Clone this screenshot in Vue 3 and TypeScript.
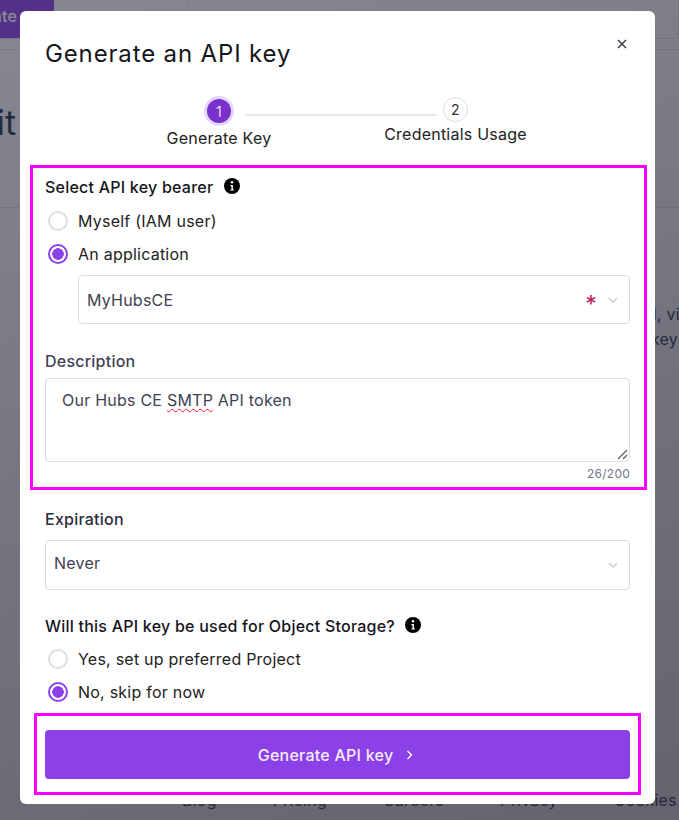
<script setup lang="ts">
const footerLinks: string[] = ['Blog', 'Pricing', 'Careers', 'Privacy', 'Cookies']
</script>

<template>
  <div class="page">
    <header class="topbar">
      <div class="topbtn"><span>Generate</span></div>
      <div class="topcell first"></div>
      <div class="topcell"></div>
    </header>
    <div class="subbar"></div>
    <div class="hero">
      <div class="herotitle">Credit</div>
    </div>
    <div class="bgtext">
      <p class="l1">by email, via</p>
      <p class="l2">your API key.</p>
    </div>
    <footer class="bgfooter">
      <span v-for="link in footerLinks" :key="link">{{ link }}</span>
    </footer>

    <div class="overlay"></div>

    <section class="modal">
      <div class="modalhead">
        <h1>Generate an API key</h1>
        <button class="close" aria-label="Close">
          <svg width="10" height="10" viewBox="0 0 10 10"><path d="M1 1l8 8M9 1L1 9" stroke="#3a3c4c" stroke-width="1.5" fill="none" /></svg>
        </button>
      </div>

      <div class="stepper">
        <div class="step step1">
          <div class="dot active">1</div>
          <div class="steplabel">Generate Key</div>
        </div>
        <div class="stepline"></div>
        <div class="step step2">
          <div class="dot idle">2</div>
          <div class="steplabel">Credentials Usage</div>
        </div>
      </div>

      <div class="mark markform">
        <div class="legend">
          <span>Select API key bearer</span>
          <svg class="info" width="16" height="16" viewBox="0 0 16 16"><circle cx="8" cy="8" r="8" fill="#000" /><circle cx="8" cy="4.3" r="1.3" fill="#fff" /><path d="M6.4 7h2.5v4.4h1v1.2H6.4v-1.2h1V8.2h-1z" fill="#fff" /></svg>
        </div>
        <label class="radio"><span class="rb"></span>Myself (IAM user)</label>
        <label class="radio"><span class="rb on"></span>An application</label>
        <div class="select appselect">
          <span>MyHubsCE</span>
          <span class="asterisk">*</span>
          <svg class="chev" width="10" height="6" viewBox="0 0 10 6"><path d="M1 1l4 4 4-4" stroke="#c9c9ce" stroke-width="1.3" fill="none" /></svg>
        </div>
        <div class="fieldlabel">Description</div>
        <div class="textarea">
          Our Hubs CE <span class="spell">SMTP</span> API token
          <svg class="grip" width="11" height="11" viewBox="0 0 11 11"><path d="M1 10L10 1M6 10l4-4" stroke="#555" stroke-width="1.1" fill="none" /></svg>
        </div>
        <div class="counter">26/200</div>
      </div>

      <div class="fieldlabel dark expl">Expiration</div>
      <div class="select expselect">
        <span>Never</span>
        <svg class="chev" width="10" height="6" viewBox="0 0 10 6"><path d="M1 1l4 4 4-4" stroke="#c9c9ce" stroke-width="1.3" fill="none" /></svg>
      </div>

      <div class="legend legend2">
        <span>Will this API key be used for Object Storage?</span>
        <svg class="info" width="16" height="16" viewBox="0 0 16 16"><circle cx="8" cy="8" r="8" fill="#000" /><circle cx="8" cy="4.3" r="1.3" fill="#fff" /><path d="M6.4 7h2.5v4.4h1v1.2H6.4v-1.2h1V8.2h-1z" fill="#fff" /></svg>
      </div>
      <label class="radio"><span class="rb"></span>Yes, set up preferred Project</label>
      <label class="radio"><span class="rb on"></span>No, skip for now</label>

      <div class="mark markbtn">
        <button class="cta">
          <span>Generate API key</span>
          <svg width="7" height="10" viewBox="0 0 7 10"><path d="M1.5 1l4 4-4 4" stroke="#fff" stroke-width="1.4" fill="none" /></svg>
        </button>
      </div>
    </section>
  </div>
</template>

<style scoped>
.page {
  position: relative;
  display: flex;
  flex-direction: column;
  width: 679px;
  height: 820px;
  overflow: hidden;
  background: #f5f5f8;
  font-family: Inter, "Liberation Sans", sans-serif;
  letter-spacing: 0.23px;
  color: #222;
}
.topbar { display: flex; flex: none; height: 38px; border-bottom: 1px solid #dcdce2; }
.topbtn {
  width: 54px;
  flex: none;
  background: #8c40e8;
  color: #fff;
  font-size: 16px;
  font-weight: 500;
  display: flex;
  align-items: center;
  padding-bottom: 6px;
  box-sizing: border-box;
  overflow: hidden;
  white-space: nowrap;
}
.topbtn span { margin-left: -55px; }
.topcell { flex: 1; border-right: 1px solid #dcdce2; }
.topcell.first { flex: 0 0 133px; }
.subbar { flex: none; height: 10px; border-bottom: 1px solid #dcdce2; }
.hero { flex: none; height: 157px; border-bottom: 1px solid #dcdce2; overflow: hidden; }
.herotitle {
  margin: 52px 0 0 -82px;
  font-size: 34px;
  color: #26344f;
  white-space: nowrap;
}
.bgtext {
  margin-top: 94px;
  display: flex;
  flex-direction: column;
  align-items: flex-end;
  color: #26344f;
  font-size: 16px;
  line-height: 25px;
}
.bgtext p { margin: 0; white-space: nowrap; }
.bgtext .l1 { margin-right: -10px; }
.bgtext .l2 { margin-right: -3px; }
.bgfooter {
  margin: auto 0 10px 182px;
  display: flex;
  gap: 56px;
  font-size: 16px;
  line-height: 20px;
  color: #3a3c4c;
  white-space: nowrap;
}
.overlay {
  position: absolute;
  inset: 0;
  background: linear-gradient(160deg, rgba(34, 35, 52, 0.52), rgba(34, 35, 52, 0.62) 55%, rgba(30, 31, 46, 0.68));
}
.modal {
  position: absolute;
  left: 20px;
  top: 11px;
  width: 635px;
  height: 793px;
  box-sizing: border-box;
  padding: 0 25px;
  background: #fff;
  border-radius: 6px;
}
.modalhead {
  display: flex;
  justify-content: space-between;
  align-items: center;
  height: 84px;
}
h1 {
  margin: 0;
  font-size: 24px;
  font-weight: 400;
  color: #15151c;
  letter-spacing: 0.85px;
}
.close {
  border: 0;
  background: none;
  padding: 0;
  margin: -19px 3px 0 0;
  display: flex;
}
.stepper {
  display: flex;
  align-items: flex-start;
  margin-top: 2px;
  padding-left: 122px;
  height: 68px;
}
.step { display: flex; flex-direction: column; align-items: center; flex: none; }
.step1 { width: 104px; padding-top: 2px; }
.stepline {
  width: 191px;
  height: 2px;
  margin: 17px -52px 0 -26px;
  background: #e8e8ea;
  flex: none;
}
.step2 { width: 143px; }
.dot {
  box-sizing: border-box;
  border-radius: 50%;
  display: flex;
  align-items: center;
  justify-content: center;
  font-size: 14px;
}
.dot.active {
  width: 24px;
  height: 24px;
  background: #7a30cc;
  color: #eadcfb;
  box-shadow: 0 0 0 3px #e6d5fb;
}
.dot.idle {
  width: 25px;
  height: 25px;
  background: #fff;
  color: #2f3145;
  border: 1px solid #dcdce0;
}
.steplabel {
  font-size: 16px;
  line-height: 20px;
  margin-top: 2px;
  color: #222;
  white-space: nowrap;
}
.step1 .steplabel { margin-top: 5px; }
.mark {
  box-sizing: border-box;
  border: 3px solid #ff00ff;
}
.markform {
  margin: 0 -17px 0 -15px;
  padding: 9px 14px 0 12px;
  height: 325px;
}
.legend {
  display: flex;
  align-items: center;
  gap: 11px;
  font-size: 16px;
  font-weight: 500;
  color: #15151c;
  height: 20px;
}
.info { margin-top: -3px; }
.radio {
  display: flex;
  align-items: center;
  gap: 10px;
  font-size: 16px;
  color: #222;
  height: 33px;
  margin-left: 3px;
}
.legend + .radio { margin-top: 7px; }
.rb {
  box-sizing: border-box;
  width: 20px;
  height: 20px;
  border-radius: 50%;
  border: 2px solid #dcdce0;
  background: #fff;
  flex: none;
}
.rb.on {
  border-color: #8c40e8;
  background: radial-gradient(circle, #8c40e8 0 5.5px, #fff 6px);
}
.select {
  box-sizing: border-box;
  display: flex;
  align-items: center;
  border: 1px solid #dcdce0;
  border-radius: 4px;
  font-size: 16px;
  color: #3f4254;
  padding: 0 11px 0 8px;
}
.select > span:first-child { flex: 1; }
.appselect { margin: 5px 0 0 33px; height: 49px; }
.asterisk {
  color: #c2185b;
  font-size: 23px;
  height: 23px;
  margin-right: 11px;
  line-height: 1;
  padding-top: 5px;
  box-sizing: border-box;
}
.fieldlabel {
  font-size: 16px;
  font-weight: 500;
  color: #3f4254;
  margin-top: 27px;
  line-height: 20px;
}
.fieldlabel.dark { color: #2a2c3a; }
.textarea {
  box-sizing: border-box;
  position: relative;
  margin-top: 7px;
  height: 84px;
  border: 1px solid #dcdce0;
  border-radius: 4px;
  padding: 11px 16px;
  font-size: 16px;
  line-height: 20px;
  color: #3f4254;
}
.spell {
  text-decoration: underline wavy #ee2030 1px;
  text-underline-offset: 2px;
}
.grip { position: absolute; right: 1px; bottom: 1px; }
.counter {
  margin-top: 4px;
  text-align: right;
  font-size: 12px;
  line-height: 16px;
  color: #74768a;
}
.expl { margin-top: 19px; }
.expselect { margin-top: 11px; height: 50px; }
.expselect > span:first-child { padding-bottom: 5px; }
.legend2 { margin-top: 26px; gap: 10px; }
.legend2 + .radio { margin-top: 6px; }
.markbtn {
  margin: 5px -11px 0 -11px;
  padding: 14px 8px 0 8px;
  height: 82px;
}
.cta {
  width: 100%;
  height: 49px;
  border: 0;
  border-radius: 4px;
  background: #8c40e8;
  color: #f5edfe;
  font-family: inherit;
  font-size: 16px;
  font-weight: 500;
  letter-spacing: 0.25px;
  display: flex;
  align-items: center;
  justify-content: center;
  gap: 13px;
  padding: 0 4px 0 0;
}
</style>
